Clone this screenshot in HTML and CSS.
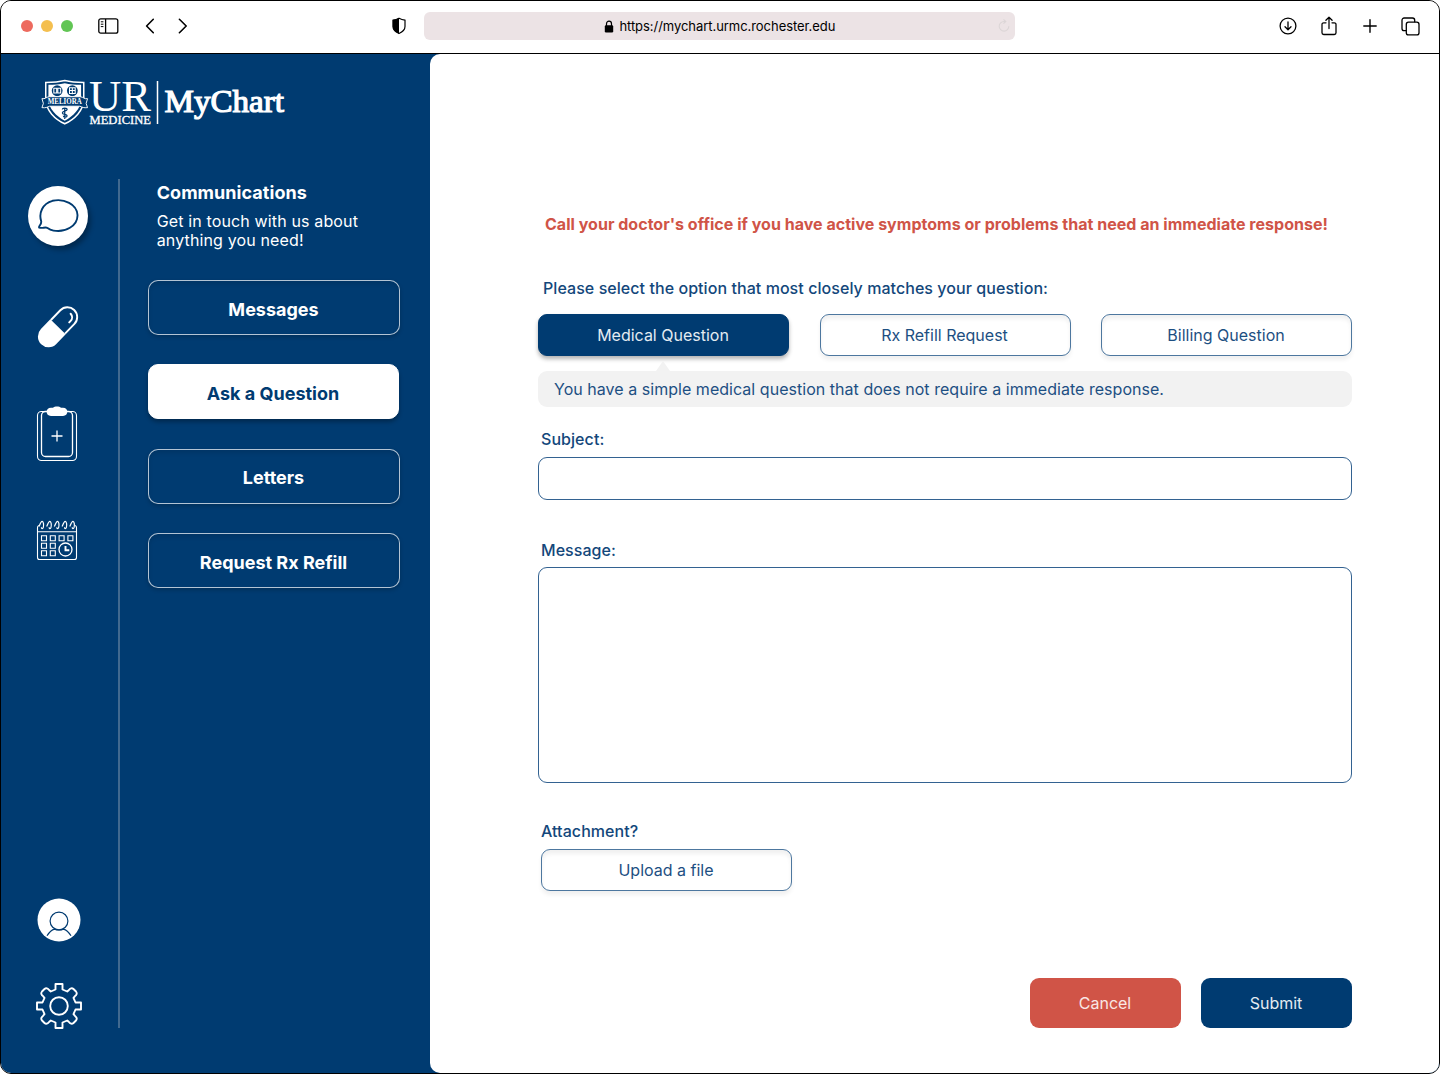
FILE: index.html
```html
<!DOCTYPE html>
<html lang="en">
<head>
<meta charset="utf-8">
<title>MyChart – Ask a Question</title>
<link rel="stylesheet" href="styles.css">
</head>
<body>
<div class="window">
  <header class="toolbar">
    <div class="lights"><span class="light red"></span><span class="light amber"></span><span class="light green"></span></div>
    <svg class="ic-sidebar" width="21" height="16" viewBox="0 0 21 16" fill="none" stroke="#000" stroke-width="1.3"><rect x=".8" y=".8" width="19" height="14.4" rx="2"/><path d="M7.6 1v14"/><path d="M2.8 3.8h2.6M2.8 6.2h2.6M2.8 8.6h2.6" stroke-width="1"/></svg>
    <svg class="ic-back" width="10" height="16" viewBox="0 0 10 16" fill="none" stroke="#000" stroke-width="1.6" stroke-linecap="round" stroke-linejoin="round"><path d="M8.3 1.3 1.6 8l6.7 6.7"/></svg>
    <svg class="ic-fwd" width="10" height="16" viewBox="0 0 10 16" fill="none" stroke="#000" stroke-width="1.6" stroke-linecap="round" stroke-linejoin="round"><path d="m1.4 1.3 6.8 6.7-6.8 6.7"/></svg>
    <svg class="ic-shield" width="16" height="18" viewBox="0 0 16 18"><path d="M8 1.2c1.8 1 3.8 1.7 6 2v6.3c0 3.2-2.8 5.6-6 7-3.2-1.4-6-3.8-6-7V3.2c2.2-.3 4.2-1 6-2z" fill="none" stroke="#000" stroke-width="1.2"/><path d="M8 1C6 2.2 4 2.8 1.8 3.1v6.4c0 3.2 2.8 5.6 6.2 7.2z"/></svg>
    <div class="address">
      <svg width="10" height="13" viewBox="0 0 10 13"><rect x=".8" y="5.3" width="8.4" height="7.2" rx="1.2"/><path d="M2.5 6V3.7a2.5 2.5 0 0 1 5 0V6" fill="none" stroke="#000" stroke-width="1.2"/></svg>
      <span class="url">https://mychart.urmc.rochester.edu</span>
      <svg class="ic-reload" width="12" height="13" viewBox="0 0 12 13" fill="none" stroke="#dcd6d7" stroke-width="1.1"><path d="M10.8 7.2A4.8 4.8 0 1 1 6 2.5h1.5M5.5.4l2.3 2.1-2.3 2.2"/></svg>
    </div>
    <svg class="ic-down" width="18" height="18" viewBox="0 0 18 18" fill="none" stroke="#000" stroke-width="1.3" stroke-linecap="round" stroke-linejoin="round"><circle cx="9" cy="9" r="7.9"/><path d="M9 5v7.500M6 9.700l3 3 3-3"/></svg>
    <svg class="ic-share" width="16" height="20" viewBox="0 0 16 20" fill="none" stroke="#000" stroke-width="1.3" stroke-linecap="round" stroke-linejoin="round"><path d="M5 6.800H2.700A1.700 1.700 0 0 0 1 8.500v8.300a1.700 1.700 0 0 0 1.700 1.700h10.600a1.700 1.700 0 0 0 1.700-1.700V8.500a1.700 1.700 0 0 0-1.700-1.700H11M8 12.500V1.200M4.900 4.200 8 1.200l3.100 3"/></svg>
    <svg class="ic-plus" width="14" height="14" viewBox="0 0 14 14" stroke="#000" stroke-width="1.4" stroke-linecap="round"><path d="M7 .8v12.400M.8 7h12.400"/></svg>
    <svg class="ic-tabs" width="19" height="19" viewBox="0 0 19 19" fill="none" stroke="#000" stroke-width="1.3"><path d="M5.300 13.700H3.200A2.200 2.200 0 0 1 1 11.500V3.200A2.200 2.200 0 0 1 3.200 1h8.300a2.200 2.200 0 0 1 2.200 2.200v2"/><rect x="5.300" y="5.200" width="12.700" height="12.700" rx="2.200"/></svg>
  </header>

  <div class="app">
    <aside class="side">
      <svg class="logo" width="250" height="60" viewBox="0 -8 250 60">
        <g transform="translate(0 1.2) scale(.95)">
        <path d="M5 4.500c7 0 14-.5 20-2 6 1.500 13 2 20 2v18C45 34 35 43.500 25 48 15 43.500 5 34 5 22.500z" fill="#003b71" stroke="#fff" stroke-width="1.600"/>
        <path d="M7.800 7c6 0 12-.5 17.200-1.800C30.200 6.500 36.200 7 42.200 7v15.500c0 9-8.500 18-17.200 22.300C16.300 40.500 7.800 31.500 7.800 22.500z" fill="#fff"/>
        <g fill="#003b71"><circle cx="17" cy="13.200" r="5.700"/><circle cx="33" cy="13.200" r="5.700"/></g>
        <g fill="none" stroke="#fff" stroke-width="1.100"><path d="M13.500 10.500h3v5h-3zM17.700 10.500h3v5h-3zM30 10h6v6h-6zM30 13h6M33 10v7"/></g>
        <path d="M1 21.500c3.500.8 4-1.700 8-2h32c4 .3 4.500 2.800 8 2l-1.500 5 1.500 4.500c-4 .5-5.500-.5-8-1.500H9C6.500 30.500 5 31.500 1 31l1.500-4.500z" fill="#003b71" stroke="#fff" stroke-width="1"/>
        <text class="motto" x="7" y="27.600" textLength="36" lengthAdjust="spacingAndGlyphs">MELIORA</text>
        <path d="M25 31v12M22.500 33c0-2 5-2 5 0s-5 1.500-5 3.500 5 1 5 3-4 2-4 0" fill="none" stroke="#003b71" stroke-width="1.300"/>
        </g>
        <text class="ur" x="48" y="34" textLength="62" lengthAdjust="spacingAndGlyphs">UR</text>
        <text class="medicine" x="48.500" y="46.800" textLength="61.500" lengthAdjust="spacingAndGlyphs">MEDICINE</text>
        <path d="M116.500 4v43" stroke="#fff" stroke-width="1.500"/>
        <text class="mychart" x="123.500" y="35" textLength="119.500" lengthAdjust="spacingAndGlyphs">MyChart</text>
      </svg>
      <div class="side-body">
        <nav class="rail">
          <span class="rail-chat"><svg width="42" height="36" viewBox="0 0 42 36" fill="none" stroke="#003b71" stroke-width="1.900" stroke-linejoin="round"><path d="M4.200 23.300C1.500 15 5.500 5.500 15.500 2.800 27 .2 40 6 40.500 17c.3 11-12.500 17.800-24 15.600-2-.4-3.800-1-6-2.600-2.400-1.400-4.700.7-8.400-.4-.6-2.400 2.500-2.100 2.100-6.300z"/></svg></span>
          <svg class="rail-pill" width="42" height="42" viewBox="0 0 42 42"><g transform="translate(21 20.800) rotate(-46)"><path d="M0-9.800h13.500a9.800 9.800 0 0 1 0 19.600H0" fill="none" stroke="#fff" stroke-width="1.900"/><path d="M0-10.700h-13.500a10.700 10.700 0 0 0 0 21.400H0z" fill="#fff"/><path d="M11 5h2a5.300 5.300 0 0 0 5.200-5" fill="none" stroke="#fff" stroke-width="2" stroke-linecap="round"/></g></svg>
          <svg class="rail-clip" width="42" height="56" viewBox="0 0 42 56" fill="none" stroke="#fff"><rect x="1.500" y="5.500" width="39" height="49" rx="4" stroke-width="1.100"/><rect x="5.500" y="5.500" width="31" height="45" rx="4" stroke-width="1.300"/><path d="M21 24.500v11M15.500 30h11" stroke-width="1.300"/><path d="M15 1.800h2C18.500 0 23.500 0 25 1.800h2c5.800 0 5.800 8.200 0 8.200H15c-5.800 0-5.800-8.200 0-8.200z" fill="#fff" stroke="none"/></svg>
          <svg class="rail-cal" width="42" height="41" viewBox="0 0 42 41" fill="none" stroke="#fff" stroke-width="1.100"><path d="M3 5.500a2 2 0 0 0-1.500 2v30a2 2 0 0 0 2 2h35a2 2 0 0 0 2-2v-30a2 2 0 0 0-1.500-2M1.500 11.800h39"/><g stroke-width="1.200"><path id="ring" d="M3 6.500C4.200 3.500 5 1.300 6.200 1.300S8 5 7.300 7.300C6.800 9 5.300 9 5.500 7.300"/><use href="#ring" x="7.700"/><use href="#ring" x="15.400"/><use href="#ring" x="23.100"/><use href="#ring" x="30.800"/></g><path d="M5.500 15.800h5v5h-5zM14.300 15.800h5v5h-5zM23.100 15.800h5v5h-5zM31.900 15.800h5v5h-5zM5.500 23.300h5v5h-5zM14.300 23.300h5v5h-5zM5.500 30.800h5v5h-5zM14.300 30.800h5v5h-5z"/><circle cx="29.500" cy="29.500" r="6.500" fill="#003b71" stroke-width="1.300"/><path d="M29.500 26v4.300h3.800" stroke-width="1.900"/></svg>
          <svg class="rail-user" width="44" height="44" viewBox="0 0 44 44"><circle cx="22" cy="22" r="21.500" fill="#fff"/><g fill="none" stroke="#003b71" stroke-width="1.200"><circle cx="22" cy="23" r="8.900"/><path d="M10 37.800c2-3.200 4.500-6 7.500-6.700 3 1.200 6 1.200 9 0 3 .7 5.500 3.500 7.500 6.700"/></g></svg>
          <svg class="rail-gear" width="46" height="46" viewBox="0 0 46 46" fill="none" stroke="#fff" stroke-width="1.900" stroke-linejoin="round"><circle cx="23" cy="23" r="8.800"/><path d="M19.500 6.500V1h7v5.500l4.700 2 1.500-1.300c1.500-2 3.300-2.500 4.800-1.200l2.500 2.500c1.300 1.500.8 3.300-1.200 4.800l-1.300 1.500 2 4.700H45v7h-5.500l-2 4.700 1.300 1.500c2 1.500 2.500 3.300 1.200 4.800L37.500 40c-1.500 1.300-3.300.8-4.800-1.200l-1.500-1.300-4.700 2V45h-7v-5.500l-4.700-2-1.500 1.300c-1.500 2-3.300 2.500-4.800 1.200L6 37.500c-1.300-1.500-.8-3.300 1.200-4.800l1.300-1.500-2-4.700H1v-7h5.500l2-4.700-1.300-1.500C5.200 11.800 4.700 10 6 8.500L8.500 6c1.500-1.300 3.300-.8 4.800 1.200l1.500 1.300z"/></svg>
        </nav>
        <section class="panel">
          <h1>Communications</h1>
          <p>Get in touch with us about anything you need!</p>
          <button class="nav-btn">Messages</button>
          <button class="nav-btn active">Ask a Question</button>
          <button class="nav-btn">Letters</button>
          <button class="nav-btn">Request Rx Refill</button>
        </section>
      </div>
    </aside>

    <main class="content">
      <p class="alert">Call your doctor's office if you have active symptoms or problems that need an immediate response!</p>
      <p class="label prompt">Please select the option that most closely matches your question:</p>
      <div class="options">
        <button class="option selected">Medical Question</button>
        <button class="option">Rx Refill Request</button>
        <button class="option">Billing Question</button>
      </div>
      <p class="hint">You have a simple medical question that does not require a immediate response.</p>
      <label class="label subject-label" for="subject">Subject:</label>
      <input class="field subject" id="subject">
      <label class="label message-label" for="message">Message:</label>
      <textarea class="field message" id="message"></textarea>
      <p class="label attach-label">Attachment?</p>
      <button class="option upload">Upload a file</button>
      <div class="actions">
        <button class="action cancel">Cancel</button>
        <button class="action submit">Submit</button>
      </div>
    </main>
  </div>
</div>
</body>
</html>
```
FILE: styles.css
```css
* { box-sizing: border-box; }

body {
  margin: 0;
  background: #fff;
  font-family: Inter, "Liberation Sans", sans-serif;
  color: #003b71;
}

h1, p { margin: 0; }
button { font-family: inherit; padding: 0; }
svg { display: block; flex: none; }

.window {
  width: 1440px;
  height: 1074px;
  border: 1px solid #000;
  border-radius: 11px;
  overflow: hidden;
  display: flex;
  flex-direction: column;
}

/* Browser toolbar */
.toolbar {
  height: 53px;
  flex: none;
  display: flex;
  align-items: center;
  padding: 0 17px 2px 20px;
  border-bottom: 1px solid #000;
  background: #fff;
}
.lights { display: flex; gap: 8px; }
.light { width: 12px; height: 12px; border-radius: 50%; }
.red { background: #ed6a5e; }
.amber { background: #f4bf4f; }
.green { background: #61c554; }
.ic-sidebar { margin-left: 25px; }
.ic-back { margin-left: 26.4px; }
.ic-fwd { margin-left: 23px; }
.ic-shield { margin-left: 202.6px; }
.address {
  position: relative;
  width: 591px;
  height: 28px;
  margin-left: 17.4px;
  border-radius: 6px;
  background: #ece3e5;
  display: flex;
  align-items: center;
  justify-content: center;
  gap: 5px;
}
.url { font-size: 13px; line-height: 16px; letter-spacing: -.05px; color: #000; }
.ic-reload { position: absolute; right: 5px; top: 7px; }
.ic-down { margin-left: 263.6px; }
.ic-share { margin-left: 24px; }
.ic-plus { margin-left: 26px; }
.ic-tabs { margin-left: 24.5px; }

.app { flex: 1; display: flex; background: #003b71; }

/* Sidebar */
.side { width: 429px; color: #fff; }
.logo { margin: 15px 0 0 40px; fill: #fff; font-family: "Liberation Serif", serif; }
.motto { font-size: 8px; font-weight: 700; }
.ur { font-size: 45px; }
.medicine { font-size: 12px; stroke: #fff; stroke-width: .3; }
.mychart { font-size: 32px; stroke: #fff; stroke-width: 1.2; }

.side-body { display: flex; margin-top: 50px; height: 849px; }
.rail {
  width: 119px;
  padding: 7px 4px 0 0;
  border-right: 2px solid #41698f;
  display: flex;
  flex-direction: column;
  align-items: center;
}
.rail-chat {
  width: 60px;
  height: 60px;
  flex: none;
  border-radius: 50%;
  background: #fff;
  box-shadow: 3px 4px 5px rgba(0, 0, 0, .3);
  display: flex;
  align-items: center;
  justify-content: center;
}
.rail-pill { margin-top: 60px; }
.rail-clip { margin: 58px 1px 0 0; }
.rail-cal { margin: 58px 1px 0 0; }
.rail-user { margin: 337px 0 0 2px; }
.rail-gear { margin: 41px 0 0 2px; }

.panel { padding-left: 28px; }
.panel h1 { margin-left: 8.7px; padding-top: 3px; font-size: 18px; line-height: 22px; font-weight: 700; letter-spacing: .05px; }
.panel p { width: 230px; margin: 8px 0 30px 8.7px; font-size: 16px; line-height: 19px; letter-spacing: .14px; }
.nav-btn {
  display: block;
  width: 252px;
  height: 55px;
  margin: 0 0 29.4px;
  border: 1px solid rgba(255, 255, 255, .7);
  border-radius: 10px;
  background: #003b71;
  box-shadow: 0 2px 4px rgba(0, 0, 0, .2), inset 0 3px 4px rgba(0, 0, 0, .1);
  color: #fff;
  font-size: 18px;
  font-weight: 700;
  padding: 3px 1px 0 0;
}
.nav-btn.active {
  width: 251px;
  border-color: #fff;
  background: #fff;
  color: #003b71;
  box-shadow: 0 3px 4px rgba(0, 0, 0, .3);
}

/* Question form */
.content {
  flex: 1;
  padding: 160px 87px 0 108px;
  border-radius: 10px 0 0 10px;
  background: #fff;
}
.alert { padding-left: 7px; font-size: 16px; line-height: 20px; font-weight: 700; letter-spacing: .025px; color: #d05447; white-space: nowrap; }
.label { display: block; padding-left: 3px; font-size: 16px; line-height: 20px; font-weight: 500; letter-spacing: .06px; color: #13477b; }
.prompt { margin-top: 44px; padding-left: 5px; }
.options { display: flex; justify-content: space-between; margin-top: 16px; }
.option {
  width: 251px;
  height: 42px;
  border: 1px solid #4d779f;
  border-radius: 9px;
  background: #fff;
  color: #1d4f82;
  font-size: 16px;
  padding-right: 1px;
  box-shadow: 0 4px 4px rgba(0, 0, 0, .06), inset 0 4px 4px rgba(0, 0, 0, .06);
}
.option.selected { background: #003b71; border-color: #003b71; color: #e4ebf1; box-shadow: 0 3px 4px rgba(0, 0, 0, .3); }
.hint {
  position: relative;
  height: 36px;
  margin-top: 15px;
  padding-left: 16px;
  border-radius: 9px;
  background: #f2f2f2;
  color: #1d4f82;
  font-size: 16px;
  line-height: 36px;
  letter-spacing: .035px;
}
.hint::before {
  content: "";
  position: absolute;
  left: 118px;
  top: -10px;
  border: 7px solid transparent;
  border-top: 0;
  border-bottom: 10px solid #f2f2f2;
}
.subject-label { margin-top: 22px; }
.field { display: block; width: 100%; border: 1px solid #336291; border-radius: 9px; background: #fff; resize: none; outline: 0; }
.subject { height: 43px; margin-top: 8px; }
.message-label { margin-top: 40px; }
.message { height: 216px; margin-top: 7px; }
.attach-label { margin-top: 38px; }
.upload { display: block; margin: 8px 0 0 3px; }
.actions { display: flex; justify-content: flex-end; gap: 20px; margin-top: 87px; }
.action { width: 151px; height: 50px; border: 0; border-radius: 9px; font-size: 16px; padding-right: 1px; color: #e4ebf1; }
.cancel { background: #d05447; color: #f9e7e4; }
.submit { background: #003b71; }
```
